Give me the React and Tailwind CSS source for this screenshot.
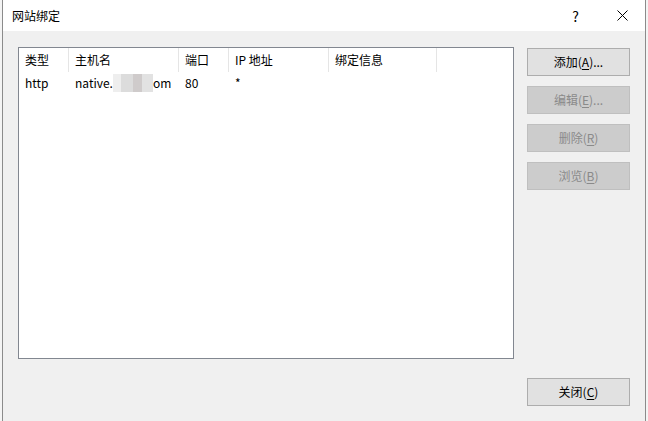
const columns = [
  { label: '类型', w: 'w-[50px]' },
  { label: '主机名', w: 'w-[110px]' },
  { label: '端口', w: 'w-[50px]' },
  { label: 'IP 地址', w: 'w-[100px]' },
  { label: '绑定信息', w: 'w-[108px]' },
]

function DlgButton({ children, disabled }) {
  return (
    <button
      className={
        disabled
          ? 'w-[103px] h-[28px] border border-[#bfbfbf] bg-[#cccccc] text-[#8a8a8a] text-[12px] flex items-center justify-center'
          : 'w-[103px] h-[28px] border border-[#adadad] bg-[#e1e1e1] text-black text-[12px] flex items-center justify-center'
      }
    >
      {children}
    </button>
  )
}

function Key({ k }) {
  return <span className="underline underline-offset-2">{k}</span>
}

export default function App() {
  return (
    <div className="w-[648px] h-[421px] flex bg-white overflow-hidden" style={{ fontFamily: '"Noto Sans CJK SC", "Noto Sans", sans-serif' }}>
      <div className="w-[2px] bg-[#f4f4f4]" />
      <div className="flex-1 flex flex-col border-x border-[#8b8b8b]">
        {/* title bar */}
        <div className="h-[31px] bg-white flex items-center pl-[9px] text-[12px] text-black">
          <span>网站绑定</span>
          <span className="ml-auto mr-[38px] text-[14px] leading-none">?</span>
          <svg width="11" height="11" viewBox="0 0 11 11" className="mr-[17px]">
            <path d="M0.5 0.5 L10.5 10.5 M10.5 0.5 L0.5 10.5" stroke="#000" strokeWidth="1" />
          </svg>
        </div>

        <div className="flex-1 bg-[#f0f0f0] flex flex-col pl-[15px] pr-[15px] pt-[16px]">
          <div className="flex">
            <div className="w-[496px] h-[312px] border border-[#828790] bg-white text-[12px] text-black">
              <div className="flex h-[24px]">
                {columns.map((c) => (
                  <div key={c.label} className={`${c.w} border-r border-[#e5e5e5] pl-[6px] flex items-center`}>
                    {c.label}
                  </div>
                ))}
              </div>
              <div className="flex h-[22px] items-center">
                <div className="w-[50px] pl-[6px]">http</div>
                <div className="w-[110px] pl-[6px] flex items-center">
                  <span>native.</span>
                  <span className="flex h-[18px]">
                    <span className="w-[8px] bg-[#eeeeee]" />
                    <span className="w-[12px] bg-[#dcdcdc]" />
                    <span className="w-[9px] bg-[#cfcbcb]" />
                    <span className="w-[11px] bg-[#e2e2e2]" />
                  </span>
                  <span>om</span>
                </div>
                <div className="w-[50px] pl-[6px]">80</div>
                <div className="w-[100px] pl-[6px]">*</div>
              </div>
            </div>
            <div className="ml-[13px] mt-[1px] flex flex-col gap-[10px]">
              <DlgButton>添加(<Key k="A" />)...</DlgButton>
              <DlgButton disabled>编辑(<Key k="E" />)...</DlgButton>
              <DlgButton disabled>删除(<Key k="R" />)</DlgButton>
              <DlgButton disabled>浏览(<Key k="B" />)</DlgButton>
            </div>
          </div>
          <div className="flex justify-end mt-[19px]">
            <DlgButton>关闭(<Key k="C" />)</DlgButton>
          </div>
        </div>
      </div>
      <div className="w-[2px] bg-[#f4f4f4]" />
    </div>
  )
}
